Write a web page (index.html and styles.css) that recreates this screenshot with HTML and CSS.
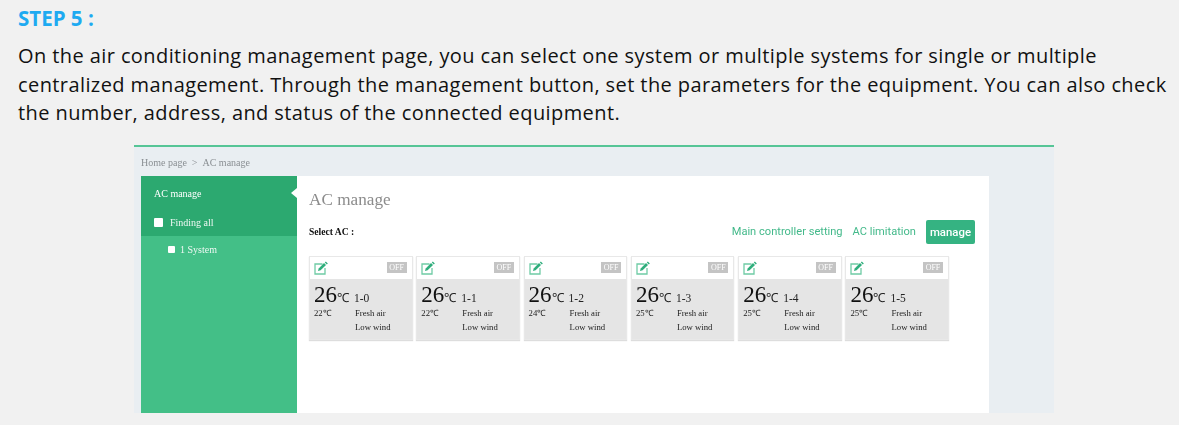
FILE: index.html
```html
<!DOCTYPE html>
<html lang="en">
<head>
<meta charset="utf-8">
<title>Step 5</title>
<link rel="stylesheet" href="styles.css">
</head>
<body>
<svg class="defs" width="0" height="0" aria-hidden="true">
  <symbol id="edit" viewBox="0 0 14 14">
    <path d="M8.5 3H1v10h10V7" fill="none" stroke="#6fcba5" stroke-width="1.3"/>
    <path d="M4 10l.7-2.6L10 2l2 2-5.4 5.3z" fill="#2fae7c"/>
    <path d="M10.8 1.4l1-1 2 2-1 1z" fill="#2fae7c"/>
  </symbol>
</svg>
<h1 class="step">STEP 5 :</h1>
<p class="intro">
  <span class="line">On the air conditioning management page, you can select one system or multiple systems for single or multiple</span>
  <span class="line">centralized management. Through the management button, set the parameters for the equipment. You can also check</span>
  <span class="line">the number, address, and status of the connected equipment.</span>
</p>
<section class="shot">
  <div class="crumbs"><span>Home page</span><span>&gt;</span><span>AC manage</span></div>
  <div class="app">
    <aside class="side">
      <div class="side-top">
        <div class="side-title">AC manage</div>
        <div class="check-row"><span class="box"></span>Finding all</div>
      </div>
      <div class="check-row sub"><span class="box small"></span>1 System</div>
    </aside>
    <main class="main">
      <h2 class="title">AC manage</h2>
      <div class="toolbar">
        <span class="select">Select AC :</span>
        <div class="actions">
          <a class="link">Main controller setting</a>
          <a class="link">AC limitation</a>
          <a class="btn">manage</a>
        </div>
      </div>
      <div class="cards">
        <article class="card">
          <div class="card-head"><svg class="icon"><use href="#edit"/></svg><span class="off">OFF</span></div>
          <div class="card-body">
            <div class="temp-row"><span class="temp">26</span><span class="unit">℃</span><span class="id">1-0</span></div>
            <div class="info"><span>22℃</span><span>Fresh air</span></div>
            <div class="info"><span></span><span>Low wind</span></div>
          </div>
        </article>
        <article class="card">
          <div class="card-head"><svg class="icon"><use href="#edit"/></svg><span class="off">OFF</span></div>
          <div class="card-body">
            <div class="temp-row"><span class="temp">26</span><span class="unit">℃</span><span class="id">1-1</span></div>
            <div class="info"><span>22℃</span><span>Fresh air</span></div>
            <div class="info"><span></span><span>Low wind</span></div>
          </div>
        </article>
        <article class="card">
          <div class="card-head"><svg class="icon"><use href="#edit"/></svg><span class="off">OFF</span></div>
          <div class="card-body">
            <div class="temp-row"><span class="temp">26</span><span class="unit">℃</span><span class="id">1-2</span></div>
            <div class="info"><span>24℃</span><span>Fresh air</span></div>
            <div class="info"><span></span><span>Low wind</span></div>
          </div>
        </article>
        <article class="card">
          <div class="card-head"><svg class="icon"><use href="#edit"/></svg><span class="off">OFF</span></div>
          <div class="card-body">
            <div class="temp-row"><span class="temp">26</span><span class="unit">℃</span><span class="id">1-3</span></div>
            <div class="info"><span>25℃</span><span>Fresh air</span></div>
            <div class="info"><span></span><span>Low wind</span></div>
          </div>
        </article>
        <article class="card">
          <div class="card-head"><svg class="icon"><use href="#edit"/></svg><span class="off">OFF</span></div>
          <div class="card-body">
            <div class="temp-row"><span class="temp">26</span><span class="unit">℃</span><span class="id">1-4</span></div>
            <div class="info"><span>25℃</span><span>Fresh air</span></div>
            <div class="info"><span></span><span>Low wind</span></div>
          </div>
        </article>
        <article class="card">
          <div class="card-head"><svg class="icon"><use href="#edit"/></svg><span class="off">OFF</span></div>
          <div class="card-body">
            <div class="temp-row"><span class="temp">26</span><span class="unit">℃</span><span class="id">1-5</span></div>
            <div class="info"><span>25℃</span><span>Fresh air</span></div>
            <div class="info"><span></span><span>Low wind</span></div>
          </div>
        </article>
      </div>
    </main>
    <div class="rail"></div>
  </div>
</section>
</body>
</html>
```

FILE: styles.css
```css
* { box-sizing: border-box; }
html, body { margin: 0; height: 425px; overflow: hidden; }
body { background: #f1f1f1; padding: 6px 0 0 18px; font-family: "Open Sans", "Noto Sans", sans-serif; color: #111; }
.defs { display: block; height: 0; }
.step { margin: 0; font-size: 20.5px; line-height: 24px; font-weight: 700; color: #1eaaf1; }
.intro { margin: 12px 0 0; font-size: 20px; line-height: 28.5px; letter-spacing: 0.41px; }
.line { display: block; white-space: nowrap; }
.shot { width: 920px; height: 268px; margin: 17px 0 0 116px; background: #e9eef2; border-top: 2px solid #56c596; padding: 0 0 0 7px; font-family: "Liberation Serif", serif; filter: blur(0.35px); }
.crumbs { display: flex; gap: 5px; height: 29px; line-height: 31px; font-size: 10px; color: #8a8f93; }
.app { display: flex; height: 237px; }
.side { width: 156px; background: #43bf87; color: #fff; font-size: 10px; }
.side-top { height: 60px; background: #2ca970; padding: 12px 13px 0; }
.side-title { line-height: 12px; margin-bottom: 17px; }
.check-row { display: flex; align-items: center; gap: 7px; line-height: 12px; color: #eef8f3; }
.sub { padding: 8px 0 0 27px; gap: 5px; }
.box { width: 9px; height: 9px; background: #fff; border-radius: 1px; }
.box.small { width: 7px; height: 7px; }
.main { position: relative; width: 692px; background: #fff; padding: 14px 14px 0 12px; }
.main::before { content: ""; position: absolute; left: -6px; top: 12px; border: 5px solid transparent; border-left: 0; border-right: 6px solid #fff; }
.title { margin: 0; font-size: 17.2px; line-height: 20px; font-weight: 400; color: #8c8c8c; }
.toolbar { display: flex; justify-content: space-between; align-items: center; margin-top: 10px; height: 24px; font-size: 10px; color: #111; }
.select { font-weight: 700; font-size: 9.6px; }
.actions { display: flex; align-items: center; gap: 10px; font-family: Roboto, sans-serif; font-size: 11.1px; }
.link { color: #43b98a; }
.btn { background: #35b382; color: #fff; width: 49px; text-align: center; height: 24px; line-height: 24px; border-radius: 2px; font-weight: 500; font-size: 11.4px; }
.cards { display: flex; gap: 3.8px; margin-top: 12px; }
.card { width: 103.5px; height: 84px; border: 1px solid #e8e8e8; background: #fff; box-shadow: 0 1px 1px #ddd; }
.card-head { display: flex; justify-content: space-between; align-items: center; height: 22px; padding: 0 5px 0 4px; }
.icon { width: 14px; height: 14px; }
.off { width: 20px; height: 11px; background: #c4c4c4; color: #fff; font-size: 8px; line-height: 11px; text-align: center; }
.card-body { height: 60px; background: #e5e5e5; padding: 5px 4px 0; color: #222; }
.temp-row { display: flex; align-items: baseline; height: 22px; }
.temp { font-size: 23px; line-height: 22px; color: #111; }
.unit { font-size: 12.5px; width: 14px; font-family: "Liberation Sans", sans-serif; }
.id { font-size: 11.5px; margin-left: 3px; }
.info { display: grid; grid-template-columns: 41px 1fr; font-size: 8.7px; height: 14.5px; line-height: 14.5px; }
.rail { flex: 1; }
```
